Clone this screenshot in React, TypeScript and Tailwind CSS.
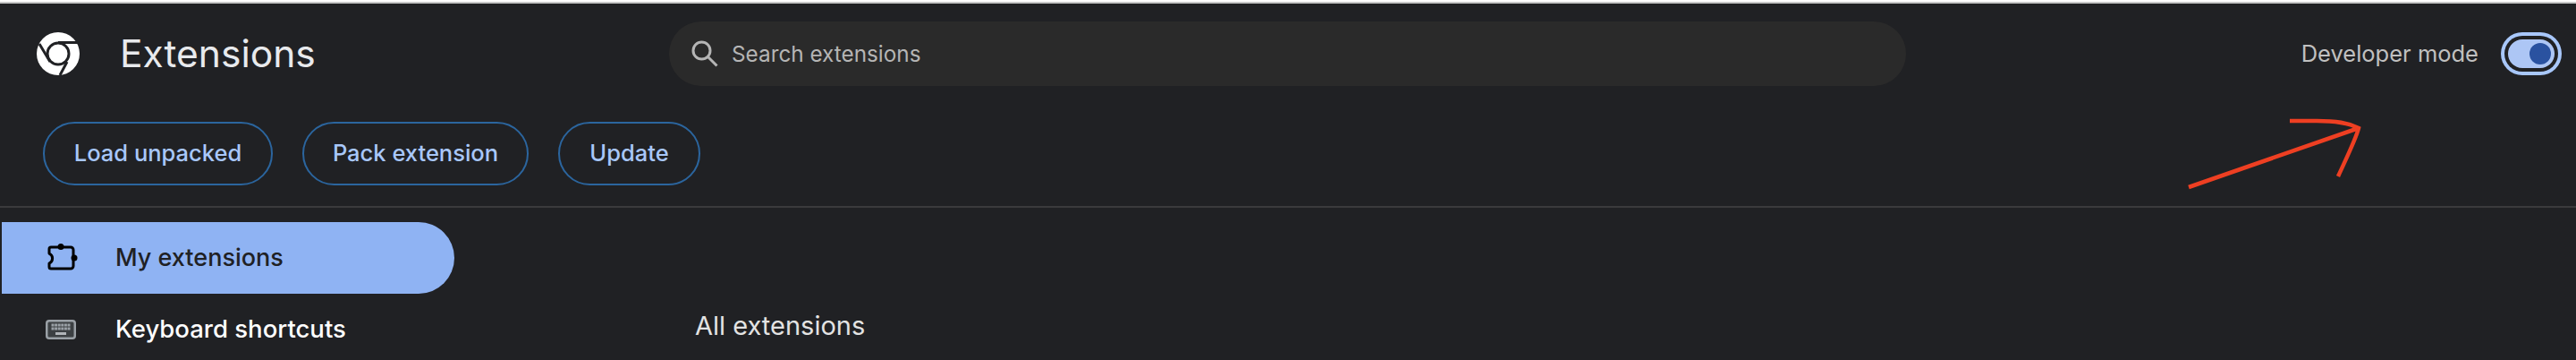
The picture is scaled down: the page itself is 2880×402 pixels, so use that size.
const ChromeLogo = () => (
  <svg width="48" height="48" viewBox="0 0 48 48">
    <circle cx="24" cy="24" r="24" fill="#ffffff" />
    <circle cx="24" cy="24" r="12" fill="#ffffff" stroke="#202124" strokeWidth="3" />
    <path d="M24 11.5H47M3 13L15 33M34 33L26 48" stroke="#202124" strokeWidth="3" fill="none" />
  </svg>
);

const PuzzleIcon = () => (
  <svg width="34" height="34" viewBox="0 2 34 34" fill="none">
    <path
      d="M4 7H26A3 3 0 0 1 29 10V28A3 3 0 0 1 26 31H4A2 2 0 0 1 2 29V25A6 6 0 0 0 2 14V9A2 2 0 0 1 4 7Z"
      stroke="#000000"
      strokeWidth="3"
      strokeLinejoin="round"
    />
    <circle cx="15" cy="6.5" r="3.5" fill="#000000" />
    <circle cx="30" cy="19" r="3.5" fill="#000000" />
  </svg>
);

const KeyboardIcon = () => {
  const keys = [0, 1, 2, 3, 4, 5];
  return (
    <svg width="34" height="22" viewBox="0 0 34 22">
      <rect width="34" height="22" rx="4" fill="#9aa0a6" />
      <rect x="2.5" y="2.5" width="29" height="17" rx="1.5" fill="#3c4043" />
      {keys.map((k) => (
        <rect key={k} x={6.5 + k * 3.6} y="4.5" width="3" height="3" fill="#9aa0a6" />
      ))}
      {keys.map((k) => (
        <rect key={k} x={6.5 + k * 3.6} y="8.5" width="3" height="3" fill="#9aa0a6" />
      ))}
      <rect x="11" y="14" width="12" height="3" fill="#b0b4b8" />
    </svg>
  );
};

const SearchIcon = () => (
  <svg width="30" height="30" viewBox="0 0 30 30" fill="none" stroke="#b5b5b5" strokeWidth="3">
    <circle cx="11.5" cy="11.5" r="9.5" />
    <path d="M18.5 18.5L28.5 28.5" />
  </svg>
);

const Arrow = () => (
  <svg className="absolute left-[2440px] top-[130px]" width="210" height="85" viewBox="0 0 210 85" fill="none">
    <path
      d="M7 79L197 13M120 5H150C172 5 185 7 197 13C194 25 184 45 174 67"
      stroke="#ee3f22"
      strokeWidth="4.5"
    />
  </svg>
);

const actions = [
  { label: 'Load unpacked', width: 'w-[257px]' },
  { label: 'Pack extension', width: 'w-[253px]' },
  { label: 'Update', width: 'w-[159px]' },
];

export default function App() {
  return (
    <div className="relative h-[402px] w-[2880px] overflow-hidden bg-[#202124] font-['Inter',sans-serif]">
      <div className="h-[4px] border-t-2 border-white bg-[#c8c8c8]" />

      <header className="flex h-[112px] items-center">
        <div className="ml-[41px] flex w-[707px] items-center gap-[45px]">
          <ChromeLogo />
          <h1 className="text-[42.5px] leading-none text-[#e8eaed]">Extensions</h1>
        </div>
        <div className="flex h-[72px] w-[1383px] items-center gap-[15px] rounded-full bg-[#2a2a2a] pl-[25px]">
          <SearchIcon />
          <span className="text-[24.3px] text-[#b5b5b5]">Search extensions</span>
        </div>
        <div className="ml-auto mr-[16px] flex items-center gap-[25px]">
          <span className="text-[25.5px] text-[#c0c0c0]">Developer mode</span>
          <div className="flex h-[48px] w-[68px] items-center rounded-full bg-[#a8c7fa] p-[4px]">
            <div className="flex h-[40px] w-[60px] items-center rounded-full bg-[#202124] p-[4px]">
              <div className="flex h-[32px] w-[52px] items-center justify-end rounded-full bg-[#adc6f5] pr-[4px]">
                <div className="h-[24px] w-[24px] rounded-full bg-[#2a52a0]" />
              </div>
            </div>
          </div>
        </div>
      </header>

      <div className="flex h-[116px] items-start gap-[33px] border-b-2 border-[#3a3a3c] pl-[48px] pt-[20px]">
        {actions.map((a) => (
          <button
            key={a.label}
            className={`${a.width} h-[71px] rounded-full border-2 border-[#2b659e] text-[25.5px] font-medium text-[#a8c7fa]`}
          >
            {a.label}
          </button>
        ))}
      </div>

      <div className="flex pt-[16px]">
        <nav className="w-[777px]">
          <div className="ml-[2px] flex h-[80px] w-[506px] items-center gap-[42px] rounded-r-full bg-[#8fb3f3] pl-[51px]">
            <PuzzleIcon />
            <span className="text-[27px] font-medium text-[#202124]">My extensions</span>
          </div>
          <div className="flex h-[80px] items-center gap-[44px] pl-[51px]">
            <KeyboardIcon />
            <span className="text-[27.5px] font-medium text-white">Keyboard shortcuts</span>
          </div>
        </nav>
        <h2 className="mt-[101px] text-[29px] leading-none text-[#e3e3e3]">All extensions</h2>
      </div>

      <Arrow />
    </div>
  );
}
